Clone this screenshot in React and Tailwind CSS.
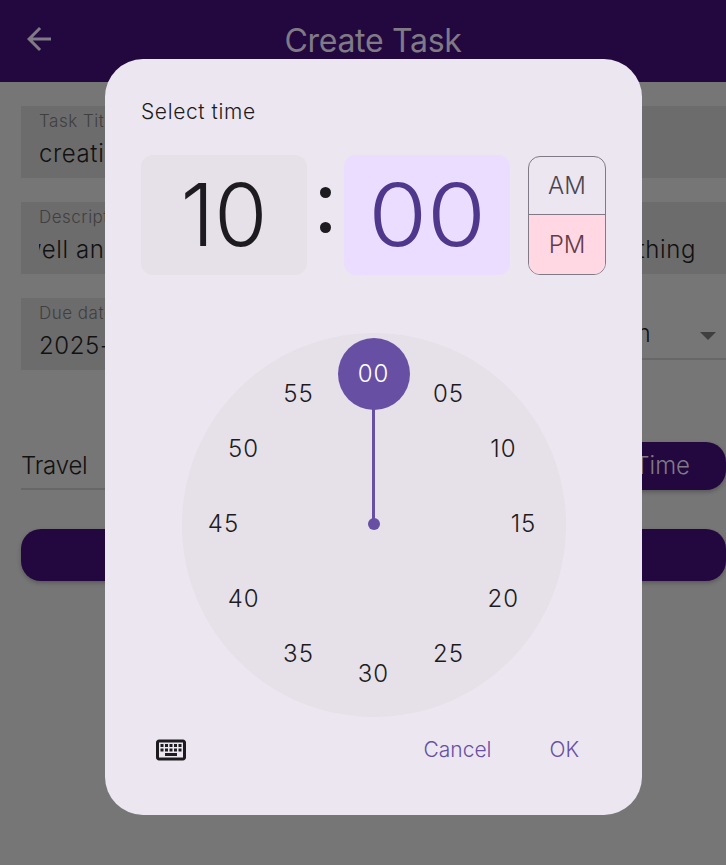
import React from "react";

const FONT = '"Inter", "Liberation Sans", sans-serif';
const labels = [
  ["00", 0], ["05", 30], ["10", 60], ["15", 90], ["20", 120], ["25", 150],
  ["30", 180], ["35", 210], ["40", 240], ["45", 270], ["50", 300], ["55", 330],
];

function Field({ label, children, className = "" }) {
  return (
    <div className={`h-[72px] bg-[#6c6c6c] pl-[19px] pt-[4px] overflow-hidden ${className}`}>
      <div className="text-[17px] leading-[22px] tracking-[0.5px] text-[#3f3f3f] font-light -ml-[1px]">{label}</div>
      <div className="mt-[4px] -ml-[1px] text-[24px] leading-[36px] tracking-[0.6px] text-[#111111] font-[350] whitespace-nowrap overflow-hidden">{children}</div>
    </div>
  );
}

function Dial() {
  return (
    <div className="relative w-[384px] h-[384px] rounded-full bg-[#e6e0e9]">
      <div className="absolute left-[190.5px] top-[42px] w-[3px] h-[150px] bg-[#6750a4]" />
      <div className="absolute left-[186px] top-[185px] w-[12px] h-[12px] rounded-full bg-[#6750a4]" />
      <div className="absolute left-[156px] top-[5px] w-[72px] h-[72px] rounded-full bg-[#6750a4]" />
      {labels.map(([t, deg]) => {
        const a = (deg * Math.PI) / 180;
        const x = 192 + 150 * Math.sin(a);
        const y = 191 - 150 * Math.cos(a);
        return (
          <div
            key={t}
            className={`absolute -translate-x-1/2 -translate-y-1/2 text-[24px] leading-[30px] font-light tracking-[1px] ${t === "00" ? "text-white" : "text-[#1d1b20]"}`}
            style={{ left: x, top: y }}
          >
            {t}
          </div>
        );
      })}
    </div>
  );
}

export default function App() {
  return (
    <div className="relative w-[726px] h-[865px] overflow-hidden bg-[#767676]" style={{ fontFamily: FONT }}>
      <header className="relative h-[82px] bg-[#230840] flex items-center justify-center pl-[20px]">
        <svg className="absolute left-[21px] top-[21px]" width="36" height="36" viewBox="0 0 24 24" fill="#7f7a85">
          <path d="M20 11H7.83l5.59-5.59L12 4l-8 8 8 8 1.41-1.41L7.83 13H20v-2z" />
        </svg>
        <h1 className="text-[32px] leading-[40px] tracking-[-0.3px] text-[#7f7a85] font-normal">Create Task</h1>
      </header>

      <main className="pl-[21px] pt-[24px] flex flex-col">
        <Field label="Task Title">creating a task</Field>
        <Field label="Description" className="mt-[24px]">
          <div className="flex justify-between pr-[30px]">
            <span className="-ml-[17px]">well and</span>
            <span>everything</span>
          </div>
        </Field>
        <div className="mt-[24px] flex h-[72px]">
          <Field label="Due date" className="w-[300px]">2025-10-10</Field>
          <div className="relative flex-1 flex items-center border-b-2 border-[#676767] h-[62px] pl-[239px]">
            <span className="text-[24px] text-[#111111] font-[350] mt-[12px]">Medium</span>
            <svg className="absolute right-[6px] top-[26px]" width="24" height="24" viewBox="0 0 24 24" fill="#3f3f3f">
              <path d="M4 8h16l-8 8z" />
            </svg>
          </div>
        </div>
        <div className="mt-[72px] flex items-end h-[48px]">
          <div className="flex-1 h-[48px] border-b-2 border-[#676767] text-[24px] leading-[48px] -tracking-[0.2px] text-[#111111] font-[350]">Travel</div>
          <div className="w-[300px] ml-[16px] h-[48px] bg-[#230840] rounded-[20px] flex items-center justify-end pr-[36px] text-[24px] text-[#7f7a85] font-[350] shadow-[0_2px_4px_rgba(0,0,0,0.25)]">Select Time</div>
        </div>
        <div className="mt-[39px] h-[52px] bg-[#230840] rounded-[20px] shadow-[0_2px_4px_rgba(0,0,0,0.25)]" />
      </main>

      <div className="absolute left-[105px] top-[59px] w-[537px] h-[756px] rounded-[38px] bg-[#ece6f0] px-[36px] pt-[41px] flex flex-col">
        <div className="text-[21px] leading-[24px] text-[#1d1b20] font-light tracking-[0.6px]">Select time</div>
        <div className="mt-[31px] flex items-stretch h-[120px]">
          <div className="w-[166px] rounded-[12px] bg-[#e6e0e9] flex items-center justify-center text-[86px] leading-none text-[#1d1b20] font-[350]">10</div>
          <div className="w-[37px] relative">
            <div className="absolute left-[12.5px] top-[32px] w-[11px] h-[11px] rounded-full bg-[#1d1b20]" />
            <div className="absolute left-[12.5px] top-[67px] w-[11px] h-[11px] rounded-full bg-[#1d1b20]" />
          </div>
          <div className="w-[166px] rounded-[12px] bg-[#eaddff] flex items-center justify-center text-[86px] leading-none text-[#4f378b] font-[350]">
            <span className="scale-x-[1.11]">00</span>
          </div>
          <div className="ml-[18px] mt-[1px] h-[119px] w-[78px] rounded-[12px] border-[1.5px] border-[#7f7a85] overflow-hidden flex flex-col">
            <div className="h-[57px] flex items-center justify-center text-[24px] text-[#49454f] font-light">AM</div>
            <div className="flex-1 border-t-[1.5px] border-[#7f7a85] bg-[#ffd8e4] flex items-center justify-center text-[24px] text-[#633b48] font-light">PM</div>
          </div>
        </div>
        <div className="mt-[58px] flex justify-center">
          <Dial />
        </div>
        <div className="mt-[15px] flex items-center h-[36px]">
          <svg className="ml-[12px]" width="36" height="36" viewBox="0 0 24 24" fill="#1d1b20">
            <path d="M20 7v10H4V7h16m0-2H4c-1.1 0-1.99.9-1.99 2L2 17c0 1.1.9 2 2 2h16c1.1 0 2-.9 2-2V7c0-1.1-.9-2-2-2zm-9 3h2v2h-2zm0 3h2v2h-2zM8 8h2v2H8zm0 3h2v2H8zm-3 0h2v2H5zm0-3h2v2H5zm3 6h8v2H8zm6-3h2v2h-2zm0-3h2v2h-2zm3 3h2v2h-2zm0-3h2v2h-2z" />
          </svg>
          <div className="ml-auto flex items-center gap-[58px] pr-[27px] text-[21px] font-light text-[#6750a4]">
            <span>Cancel</span>
            <span>OK</span>
          </div>
        </div>
      </div>
    </div>
  );
}
